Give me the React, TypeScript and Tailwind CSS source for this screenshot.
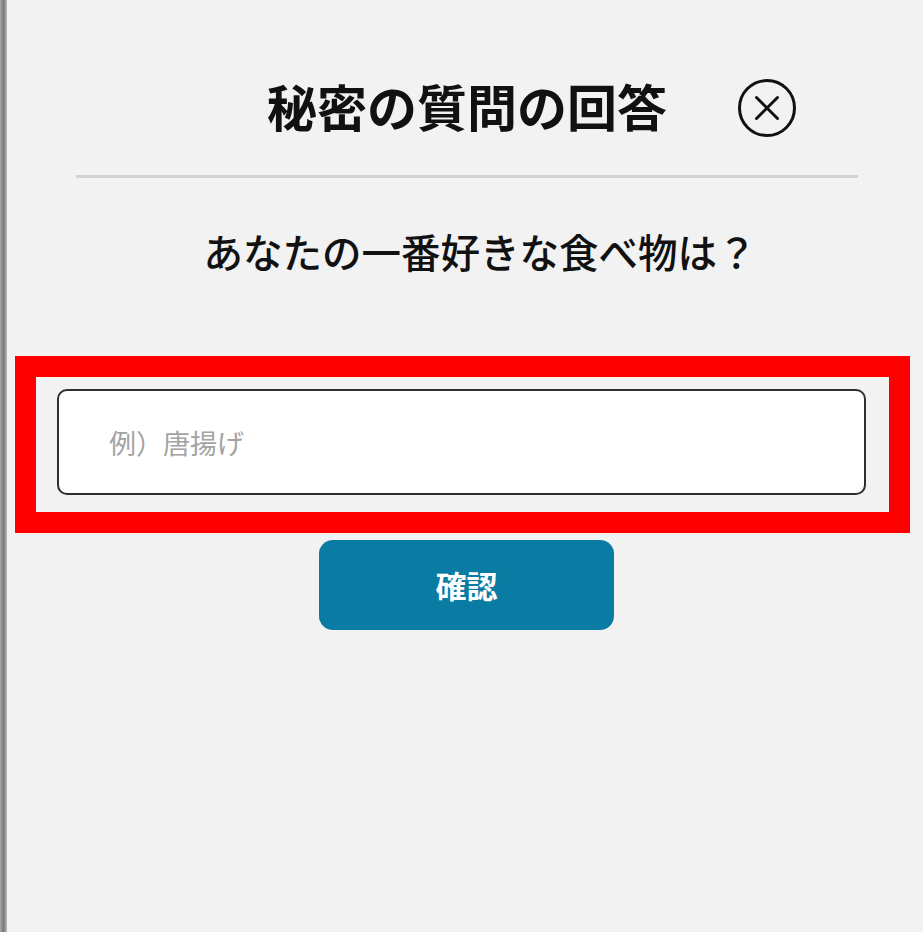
import React from "react";

const jp = "font-['Noto_Sans_CJK_JP','Noto_Sans',sans-serif]";

function CloseIcon() {
  return (
    <svg width="60" height="60" viewBox="0 0 60 60" fill="none">
      <circle cx="30" cy="30" r="27.5" stroke="#111" strokeWidth="3" />
      <path d="M19.5 19.5 L40.5 40.5 M40.5 19.5 L19.5 40.5" stroke="#111" strokeWidth="3" strokeLinecap="round" />
    </svg>
  );
}

export default function App() {
  return (
    <div className={`flex h-[932px] w-[923px] overflow-hidden bg-[#f2f2f2] ${jp}`}>
      {/* left edge of the window */}
      <div className="h-full w-[7px] shrink-0 bg-gradient-to-r from-[#a9aba9] via-[#767b78] to-[#b9bbb9]" />

      <div className="flex flex-1 flex-col">
        {/* Header */}
        <div className="mt-[77px] grid grid-cols-[1fr_auto_1fr] items-center">
          <div />
          <h1 className="-translate-y-[3px] translate-x-[2px] text-[50px] font-bold leading-[60px] text-[#111]">
            秘密の質問の回答
          </h1>
          <div className="flex pl-[72px] pt-[1px]">
            <button className="flex h-[60px] w-[60px] items-center justify-center">
              <CloseIcon />
            </button>
          </div>
        </div>

        {/* Divider */}
        <div className="ml-[69px] mt-[37px] h-[3px] w-[782px] bg-[#d2d2d2]" />

        {/* Question */}
        <p className="mt-[48px] pl-[30px] text-center text-[39.5px] font-medium leading-[50px] text-[#111]">
          あなたの一番好きな食べ物は？
        </p>

        {/* Answer field (highlighted) */}
        <div className="ml-[8px] mt-[80px] w-[895px] border-[21px] border-[#ff0000] pb-[17px] pl-[21px] pr-[23px] pt-[12px]">
          <input
            type="text"
            placeholder="例）唐揚げ"
            className="h-[106px] w-full rounded-[10px] border-2 border-[#2e2e2e] bg-white pl-[50px] text-[27px] text-[#222] outline-none placeholder:text-[#a3a3a3]"
          />
        </div>

        {/* Confirm */}
        <div className="mt-[7px] flex justify-center pl-[3px]">
          <button className="flex h-[90px] w-[295px] items-center justify-center rounded-[14px] bg-[#0a7ba3] text-[31px] font-bold text-white">
            確認
          </button>
        </div>
      </div>
    </div>
  );
}
